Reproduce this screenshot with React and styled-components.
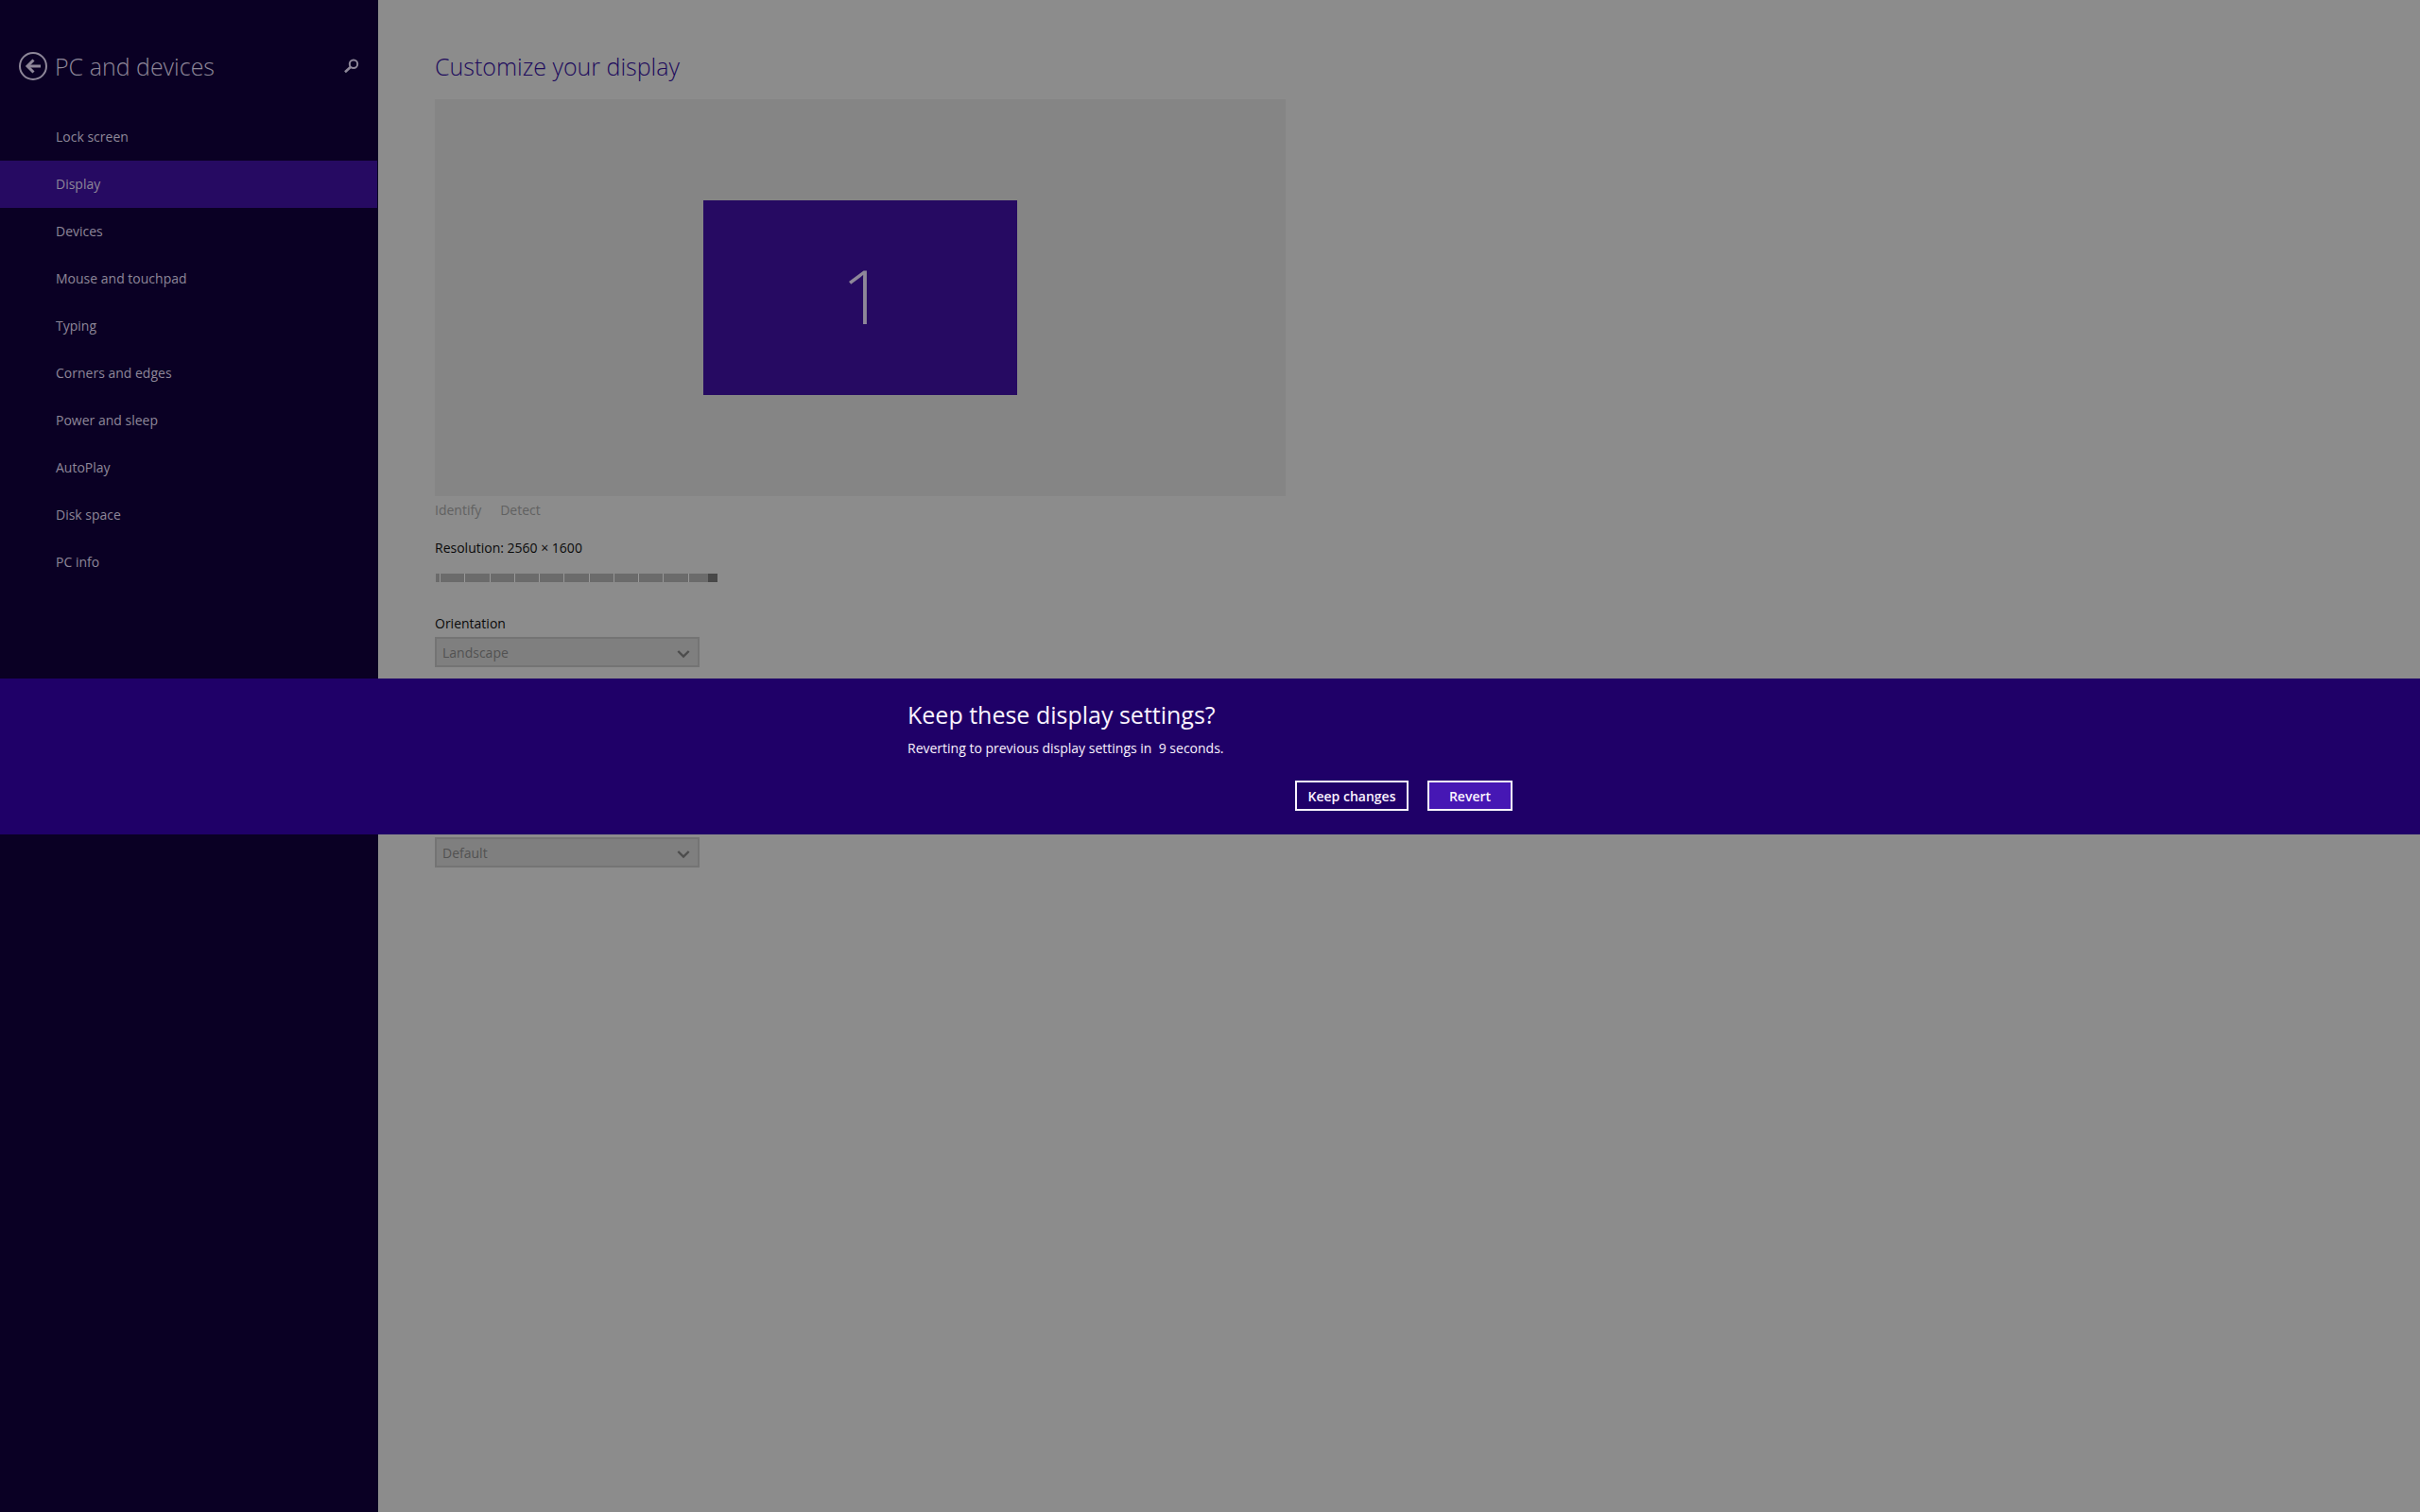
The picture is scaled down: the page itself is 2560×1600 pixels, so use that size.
import React, { useState } from 'react';
import styled, { createGlobalStyle } from 'styled-components';

const COLORS = {
  sidebar: '#0a0024',
  accent: '#260a62',
  dialog: '#1f0068',
  focus: '#4617b4',
  page: '#8c8c8c',
  panel: '#858585',
  sidebarText: '#8e8799',
  lightText: '#fbf3ff',
};

const NAV_ITEMS = [
  'Lock screen',
  'Display',
  'Devices',
  'Mouse and touchpad',
  'Typing',
  'Corners and edges',
  'Power and sleep',
  'AutoPlay',
  'Disk space',
  'PC info',
];

const TICKS = [4, 30, 57, 83, 109, 135, 162, 188, 214, 240, 267];

const tickLayers = TICKS.map(
  (x) => `linear-gradient(#989898, #989898) ${x}px 0 / 1px 100% no-repeat`
).join(', ');

const BackIcon = () => (
  <svg width="30" height="30" viewBox="0 0 30 30" fill="none" stroke="currentColor">
    <circle cx="15" cy="15" r="14" strokeWidth="2" />
    <path d="M9 15H23" strokeWidth="3" />
    <path d="M15.5 8.5L9 15L15.5 21.5" strokeWidth="3" />
  </svg>
);

const SearchIcon = () => (
  <svg width="16" height="16" viewBox="0 0 16 16" fill="none" stroke="currentColor">
    <circle cx="10" cy="5.7" r="4.2" strokeWidth="2" />
    <path d="M7 8.8L1 14.3" strokeWidth="2.6" />
  </svg>
);

const ChevronIcon = () => (
  <svg width="14" height="10" viewBox="0 0 14 10" fill="none" stroke="currentColor">
    <path d="M1.3 2L7 7.5L12.7 2" strokeWidth="2.4" />
  </svg>
);

const Dropdown = ({ id, label, options }) => (
  <SelectWrapper>
    <Select id={id} aria-label={label} disabled>
      {options.map((option) => (
        <option key={option}>{option}</option>
      ))}
    </Select>
    <SelectArrow>
      <ChevronIcon />
    </SelectArrow>
  </SelectWrapper>
);

const App = () => {
  const [active, setActive] = useState('Display');
  const [open, setOpen] = useState(true);

  function closeDialog() {
    setOpen(false);
  }

  return (
    <Page>
      <GlobalStyle />
      <Sidebar>
        <SidebarHeader>
          <IconButton aria-label="Back">
            <BackIcon />
          </IconButton>
          <SidebarTitle>PC and devices</SidebarTitle>
          <IconButton aria-label="Search">
            <SearchIcon />
          </IconButton>
        </SidebarHeader>
        <nav>
          {NAV_ITEMS.map((item) => (
            <NavLink
              key={item}
              href="#"
              $active={item === active}
              onClick={() => setActive(item)}
            >
              {item}
            </NavLink>
          ))}
        </nav>
      </Sidebar>

      <Content>
        <Heading>Customize your display</Heading>
        <DisplayPanel>
          <Monitor>1</Monitor>
        </DisplayPanel>
        <LinkRow>
          <TextButton disabled>Identify</TextButton>
          <TextButton disabled>Detect</TextButton>
        </LinkRow>
        <Field $space={31}>
          <Label htmlFor="resolution">Resolution: 2560 × 1600</Label>
          <Slider id="resolution" type="range" min="0" max="11" defaultValue="11" disabled />
        </Field>
        <Field $space={180}>
          <Label htmlFor="orientation">Orientation</Label>
          <Dropdown id="orientation" options={['Landscape', 'Portrait']} />
        </Field>
        <Dropdown id="scale" label="Size of items" options={['Default', 'Larger']} />
      </Content>

      {open && (
        <Overlay>
          <DialogBand role="dialog" aria-labelledby="dialog-title">
            <DialogBody>
              <DialogTitle id="dialog-title">Keep these display settings?</DialogTitle>
              <DialogText>Reverting to previous display settings in&nbsp; 9 seconds.</DialogText>
              <DialogActions>
                <DialogButton $width={120} onClick={closeDialog}>Keep changes</DialogButton>
                <DialogButton $width={90} $primary onClick={closeDialog}>Revert</DialogButton>
              </DialogActions>
            </DialogBody>
          </DialogBand>
        </Overlay>
      )}
    </Page>
  );
};

const GlobalStyle = createGlobalStyle`
  * {
    box-sizing: border-box;
  }

  body {
    margin: 0;
    background-color: ${COLORS.page};
  }

  body, button, select {
    font-family: 'Open Sans', 'Noto Sans', sans-serif;
    font-size: 14px;
    line-height: 20px;
  }
`;

const Page = styled.div`
  display: flex;
  min-height: 100vh;
`;

const Sidebar = styled.aside`
  width: 400px;
  flex-shrink: 0;
  background-color: ${COLORS.sidebar};
  color: ${COLORS.sidebarText};
`;

const SidebarHeader = styled.header`
  display: flex;
  align-items: center;
  gap: 8px;
  height: 120px;
  padding: 20px 20px 0;
`;

const SidebarTitle = styled.h1`
  flex: 1;
  margin: 0;
  font-size: 25px;
  font-weight: 300;
  line-height: 40px;
`;

const IconButton = styled.button`
  display: flex;
  padding: 0;
  border: none;
  background: none;
  color: inherit;
  cursor: pointer;
`;

const NavLink = styled.a`
  display: block;
  margin-right: 1px;
  padding: 0 59px;
  line-height: 50px;
  color: inherit;
  text-decoration: none;
  background-color: ${(props) => (props.$active ? COLORS.accent : 'transparent')};
`;

const Content = styled.main`
  flex: 1;
  padding: 50px 60px;
`;

const Heading = styled.h2`
  margin: 0 0 15px;
  font-size: 25px;
  font-weight: 300;
  line-height: 40px;
  color: #1d0a5c;
`;

const DisplayPanel = styled.section`
  display: flex;
  align-items: center;
  justify-content: center;
  max-width: 900px;
  height: 420px;
  background-color: ${COLORS.panel};
`;

const Monitor = styled.div`
  display: flex;
  align-items: center;
  justify-content: center;
  width: 332px;
  height: 206px;
  padding: 0 0 6px 6px;
  background-color: ${COLORS.accent};
  color: ${COLORS.sidebarText};
  font-size: 80px;
  font-weight: 300;
`;

const LinkRow = styled.div`
  display: flex;
  gap: 20px;
  padding: 5px 0 20px;
`;

const TextButton = styled.button`
  padding: 0;
  border: none;
  background: none;
  color: #616161;
`;

const Field = styled.div`
  display: flex;
  flex-direction: column;
  align-items: flex-start;
  margin-bottom: ${(props) => props.$space}px;
`;

const Label = styled.label`
  margin-bottom: 4px;
  color: #0a0a0a;
`;

const Slider = styled.input`
  appearance: none;
  width: 298px;
  height: 9px;
  margin: 13px 1px 3px;
  background: ${tickLayers}, #6b6b6b;

  &::-webkit-slider-thumb {
    appearance: none;
    width: 10px;
    height: 9px;
    background-color: #484848;
  }
`;

const SelectWrapper = styled.div`
  position: relative;
  width: 280px;
`;

const Select = styled.select`
  appearance: none;
  display: block;
  width: 100%;
  height: 32px;
  padding: 1px 6px 0;
  border: 2px solid #747474;
  border-radius: 0;
  background-color: #7f7f7f;
  color: #525252;
  opacity: 1;
`;

const SelectArrow = styled.span`
  position: absolute;
  top: 13px;
  right: 10px;
  display: flex;
  color: #4c4c4c;
  pointer-events: none;
`;

const Overlay = styled.div`
  position: fixed;
  inset: 0;
  display: flex;
  align-items: center;
`;

const DialogBand = styled.div`
  width: 100%;
  background-color: ${COLORS.dialog};
  color: ${COLORS.lightText};
`;

const DialogBody = styled.div`
  max-width: 640px;
  margin: 0 auto;
  padding: 20px 0 25px;
`;

const DialogTitle = styled.h2`
  margin: 0 0 8px;
  font-size: 25px;
  font-weight: 400;
  line-height: 36px;
`;

const DialogText = styled.p`
  margin: 0 0 24px;
`;

const DialogActions = styled.div`
  display: flex;
  justify-content: flex-end;
  gap: 20px;
`;

const DialogButton = styled.button`
  width: ${(props) => props.$width}px;
  height: 32px;
  padding: 2px 0 0;
  border: 2px solid ${COLORS.lightText};
  background-color: ${(props) => (props.$primary ? COLORS.focus : 'transparent')};
  color: ${COLORS.lightText};
  font-weight: 600;
  cursor: pointer;
`;

export default App;
